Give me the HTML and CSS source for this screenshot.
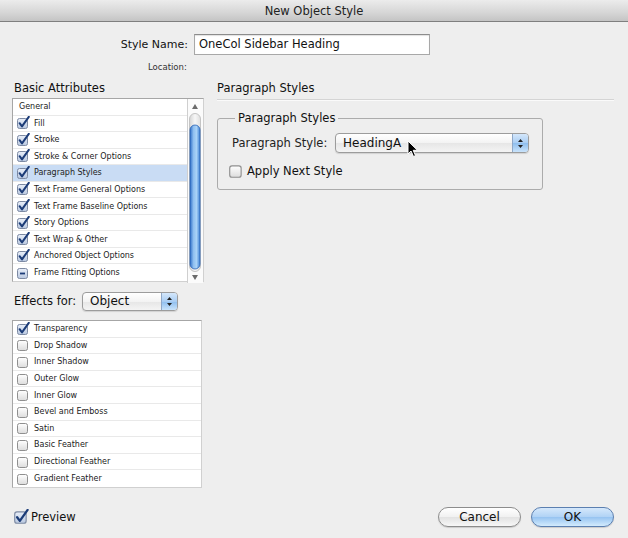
FILE: index.html
```html
<!DOCTYPE html>
<html>
<head>
<meta charset="utf-8">
<title>New Object Style</title>
<link rel="stylesheet" href="styles.css">
</head>
<body>
<svg class="defs" width="0" height="0" aria-hidden="true">
  <defs>
    <linearGradient id="boxg" x1="0" y1="0" x2="0" y2="1">
      <stop offset="0" stop-color="#ffffff"/>
      <stop offset="1" stop-color="#dcdcdc"/>
    </linearGradient>
    <linearGradient id="boxc" x1="0" y1="0" x2="0" y2="1">
      <stop offset="0" stop-color="#e9eff9"/>
      <stop offset="1" stop-color="#b9c8e0"/>
    </linearGradient>
    <linearGradient id="thumb" x1="0" y1="0" x2="1" y2="0">
      <stop offset="0" stop-color="#2f6fc8"/>
      <stop offset="0.35" stop-color="#8fbff0"/>
      <stop offset="0.65" stop-color="#a9d2f7"/>
      <stop offset="1" stop-color="#3f82d6"/>
    </linearGradient>
    <linearGradient id="track" x1="0" y1="0" x2="1" y2="0">
      <stop offset="0" stop-color="#d4d4d4"/>
      <stop offset="0.5" stop-color="#f7f7f7"/>
      <stop offset="1" stop-color="#dedede"/>
    </linearGradient>
    <symbol id="cb" viewBox="0 0 14 14">
      <rect x="1.5" y="2.5" width="10" height="10" rx="2" fill="url(#boxg)" stroke="#8f8f8f"/>
    </symbol>
    <symbol id="cbc" viewBox="0 0 14 14">
      <rect x="1.5" y="2.5" width="10" height="10" rx="2" fill="url(#boxc)" stroke="#7d8aa3"/>
      <path d="M3.6 7.2 L6 10.4 L12.8 0.8" fill="none" stroke="#1c3c78" stroke-width="2" stroke-linecap="round" stroke-linejoin="round"/>
    </symbol>
    <symbol id="cbm" viewBox="0 0 14 14">
      <rect x="1.5" y="2.5" width="10" height="10" rx="2" fill="url(#boxc)" stroke="#7d8aa3"/>
      <path d="M4 7.5 H9" stroke="#1c3c78" stroke-width="1.8"/>
    </symbol>
  </defs>
</svg>

<div class="window">
  <div class="titlebar">New Object Style</div>

  <div class="content">
    <div class="name-row">
      <span class="name-label">Style Name:</span>
      <div class="field">OneCol Sidebar Heading</div>
    </div>
    <div class="loc-row">Location:</div>

    <div class="main">
      <div class="left">
        <div class="sect-label">Basic Attributes</div>
        <div class="list attrs">
          <div class="rows rows11">
            <div class="row"><span class="nocb"></span>General</div>
            <div class="row"><svg class="cb"><use href="#cbc"/></svg>Fill</div>
            <div class="row"><svg class="cb"><use href="#cbc"/></svg>Stroke</div>
            <div class="row"><svg class="cb"><use href="#cbc"/></svg>Stroke &amp; Corner Options</div>
            <div class="row sel"><svg class="cb"><use href="#cbc"/></svg>Paragraph Styles</div>
            <div class="row"><svg class="cb"><use href="#cbc"/></svg>Text Frame General Options</div>
            <div class="row"><svg class="cb"><use href="#cbc"/></svg>Text Frame Baseline Options</div>
            <div class="row"><svg class="cb"><use href="#cbc"/></svg>Story Options</div>
            <div class="row"><svg class="cb"><use href="#cbc"/></svg>Text Wrap &amp; Other</div>
            <div class="row"><svg class="cb"><use href="#cbc"/></svg>Anchored Object Options</div>
            <div class="row"><svg class="cb"><use href="#cbm"/></svg>Frame Fitting Options</div>
          </div>
          <svg class="scrollbar" width="16" height="184" viewBox="0 0 16 184">
            <rect x="0" y="0" width="16" height="184" fill="#fbfbfb"/>
            <line x1="0.5" y1="0" x2="0.5" y2="184" stroke="#cfcfcf"/>
            <path d="M8 5 L11 10 H5 Z" fill="#6b6b6b"/>
            <rect x="2.5" y="14.5" width="11" height="158" rx="5.5" fill="url(#track)" stroke="#c4c4c4"/>
            <rect x="3" y="26" width="10" height="144" rx="5" fill="url(#thumb)" stroke="#2a62b4" stroke-width="0.8"/>
            <path d="M8 181 L11 176 H5 Z" fill="#6b6b6b"/>
          </svg>
        </div>

        <div class="effects-row">
          <span class="effects-label">Effects for:</span>
          <div class="popup small">
            <span class="popup-text">Object</span>
            <span class="stepper"><svg width="7" height="11" viewBox="0 0 7 11"><path d="M3.5 1 L6 4 H1 Z M3.5 10 L6 7 H1 Z" fill="#222"/></svg></span>
          </div>
        </div>

        <div class="list effects">
          <div class="rows rows10">
            <div class="row"><svg class="cb"><use href="#cbc"/></svg>Transparency</div>
            <div class="row"><svg class="cb"><use href="#cb"/></svg>Drop Shadow</div>
            <div class="row"><svg class="cb"><use href="#cb"/></svg>Inner Shadow</div>
            <div class="row"><svg class="cb"><use href="#cb"/></svg>Outer Glow</div>
            <div class="row"><svg class="cb"><use href="#cb"/></svg>Inner Glow</div>
            <div class="row"><svg class="cb"><use href="#cb"/></svg>Bevel and Emboss</div>
            <div class="row"><svg class="cb"><use href="#cb"/></svg>Satin</div>
            <div class="row"><svg class="cb"><use href="#cb"/></svg>Basic Feather</div>
            <div class="row"><svg class="cb"><use href="#cb"/></svg>Directional Feather</div>
            <div class="row"><svg class="cb"><use href="#cb"/></svg>Gradient Feather</div>
          </div>
        </div>
      </div>

      <div class="right">
        <div class="panel-head">Paragraph Styles</div>
        <fieldset class="group">
          <legend>Paragraph Styles</legend>
          <div class="ps-row">
            <span class="ps-label">Paragraph Style:</span>
            <div class="popup wide">
              <span class="popup-text">HeadingA</span>
              <span class="stepper"><svg width="7" height="11" viewBox="0 0 7 11"><path d="M3.5 1 L6 4 H1 Z M3.5 10 L6 7 H1 Z" fill="#222"/></svg></span>
              <svg class="cursor" width="12" height="18" viewBox="0 0 12 18"><path d="M1 1 V14 L4 11 L6.5 16.5 L8.5 15.6 L6.2 10.3 H10.5 Z" fill="#000" stroke="#fff" stroke-width="1"/></svg>
            </div>
          </div>
          <div class="next-row">
            <svg class="cb big"><use href="#cb"/></svg>
            <span>Apply Next Style</span>
          </div>
        </fieldset>
      </div>
    </div>

    <div class="footer">
      <div class="preview">
        <svg class="cb preview-cb"><use href="#cbc"/></svg>
        <span>Preview</span>
      </div>
      <div class="buttons">
        <div class="btn">Cancel</div>
        <div class="btn default">OK</div>
      </div>
    </div>
  </div>
</div>
</body>
</html>
```

FILE: styles.css
```css
* { box-sizing: border-box; }

html, body {
  margin: 0;
  padding: 0;
}

body {
  font-family: "DejaVu Sans", "Liberation Sans", sans-serif;
  color: #111;
  background: #ededed;
}

.defs {
  position: absolute;
  width: 0;
  height: 0;
}

.window {
  width: 628px;
  height: 538px;
  background: #eeeeee;
  overflow: hidden;
}

.titlebar {
  height: 22px;
  background: linear-gradient(#ececec, #d6d6d6 60%, #c4c4c4);
  border-bottom: 1px solid #7f7f7f;
  text-align: center;
  font-size: 11.5px;
  line-height: 22px;
  color: #222;
}

.content {
  padding: 0 14px 0 12px;
}

.name-row {
  display: flex;
  align-items: center;
  margin-top: 12px;
  height: 21px;
}

.name-label {
  width: 176px;
  text-align: right;
  font-size: 11px;
}

.field {
  margin-left: 6px;
  width: 236px;
  height: 21px;
  background: #fff;
  border: 1px solid #a8a8a8;
  border-top-color: #8c8c8c;
  box-shadow: inset 0 1px 1px rgba(0,0,0,0.12);
  font-size: 11.5px;
  line-height: 19px;
  padding-left: 4px;
}

.loc-row {
  padding-left: 136px;
  font-size: 8.5px;
  color: #333;
  margin-top: 7px;
  height: 12px;
}

.main {
  display: flex;
  margin-top: 7px;
  gap: 13px;
}

.left {
  width: 192px;
}

.sect-label {
  font-size: 11.5px;
  height: 17px;
  padding-left: 2px;
  line-height: 15px;
}

.list {
  background: #fff;
  border: 1px solid #a6a6a6;
  border-right-color: #d0d0d0;
  border-bottom-color: #d0d0d0;
  display: flex;
}

.attrs {
  height: 184px;
}

.effects {
  width: 190px;
  height: 168px;
  margin-top: 10px;
}

.rows {
  flex: 1;
  display: grid;
}

.rows11 { grid-template-rows: repeat(11, 1fr); }
.rows10 { grid-template-rows: repeat(10, 1fr); }

.row {
  display: flex;
  align-items: center;
  font-size: 8px;
  color: #222;
  border-bottom: 1px solid #e9e9e9;
  padding-left: 3px;
  white-space: nowrap;
}

.row:last-child { border-bottom: none; }

.row.sel {
  background: #c9dcf4;
}

.nocb {
  width: 3px;
}

.cb {
  width: 14px;
  height: 14px;
  margin-right: 4px;
  flex: none;
  overflow: visible;
}

.scrollbar {
  flex: none;
  display: block;
}

.effects-row {
  display: flex;
  align-items: center;
  margin-top: 10px;
  height: 18px;
}

.effects-label {
  font-size: 11.5px;
  padding-left: 2px;
  width: 70px;
}

.popup {
  position: relative;
  display: flex;
  align-items: center;
  background: linear-gradient(#ffffff, #f3f3f3 50%, #e6e6e6 51%, #f4f4f4);
  border: 1px solid #9c9c9c;
  border-radius: 4px;
  box-shadow: 0 1px 1px rgba(0,0,0,0.12);
}

.popup.small {
  width: 96px;
  height: 19px;
}

.popup.wide {
  width: 194px;
  height: 20px;
}

.popup-text {
  flex: 1;
  font-size: 12px;
  padding-left: 7px;
  color: #111;
}

.stepper {
  width: 16px;
  align-self: stretch;
  display: flex;
  align-items: center;
  justify-content: center;
  border-left: 1px solid #8fa8c8;
  border-radius: 0 3px 3px 0;
  background: linear-gradient(#d4e7fb, #a9cdf3 50%, #8ebeee 51%, #c9e3fb);
}

.right {
  flex: 1;
}

.panel-head {
  font-size: 11.5px;
  height: 19px;
  line-height: 15px;
  border-bottom: 1px solid #d4d4d4;
  box-shadow: 0 1px 0 #fafafa;
}

.group {
  margin: 11px 0 0 0;
  width: 326px;
  height: 79px;
  border: 1px solid #ababab;
  border-radius: 3px;
  padding: 8px 13px 0 10px;
}

.group legend {
  font-size: 11.5px;
  padding: 0 3px;
  margin-left: 7px;
}

.ps-row {
  display: flex;
  align-items: center;
  height: 20px;
}

.ps-label {
  font-size: 11.5px;
  width: 107px;
  padding-left: 4px;
  color: #222;
}

.cursor {
  position: absolute;
  left: 71px;
  top: 6px;
}

.next-row {
  display: flex;
  align-items: center;
  margin-top: 10px;
  height: 16px;
  font-size: 11.5px;
}

.cb.big {
  width: 16px;
  height: 16px;
  margin-right: 3px;
}

.footer {
  display: flex;
  align-items: center;
  justify-content: space-between;
  margin-top: 19px;
  height: 20px;
}

.preview {
  display: flex;
  align-items: center;
  font-size: 11.5px;
  padding-left: 1px;
}

.preview-cb {
  width: 16px;
  height: 16px;
  margin-right: 2px;
}

.buttons {
  display: flex;
  gap: 10px;
}

.btn {
  width: 83px;
  height: 20px;
  border-radius: 10px;
  border: 1px solid #8c8c8c;
  background: linear-gradient(#ffffff, #f1f1f1 50%, #e2e2e2 51%, #f7f7f7);
  box-shadow: 0 1px 1px rgba(0,0,0,0.15);
  font-size: 12px;
  line-height: 18px;
  text-align: center;
  color: #111;
}

.btn.default {
  border-color: #5b7fb0;
  background: linear-gradient(#d5e8fb, #b0d2f5 50%, #96c3f1 51%, #d3ebfd);
}
```
